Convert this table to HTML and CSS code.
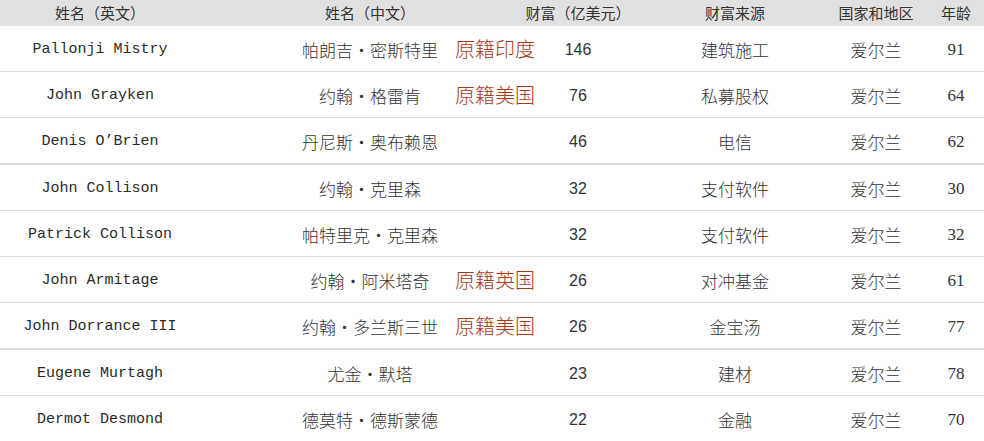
FILE: index.html
```html
<!DOCTYPE html>
<html lang="zh">
<head>
<meta charset="utf-8">
<link rel="stylesheet" href="styles.css">
</head>
<body>
<table class="rich">
  <colgroup>
    <col class="c-en"><col class="c-cn"><col class="c-w"><col class="c-src"><col class="c-ctry"><col class="c-age">
  </colgroup>
  <thead>
    <tr>
      <th class="en">姓名（英文）</th>
      <th>姓名（中文）</th>
      <th>财富（亿美元）</th>
      <th>财富来源</th>
      <th>国家和地区</th>
      <th>年龄</th>
    </tr>
  </thead>
  <tbody>
    <tr>
      <td class="en">Pallonji Mistry</td>
      <td class="cn">帕朗吉·密斯特里<span class="note">原籍印度</span></td>
      <td class="num">146</td><td class="src">建筑施工</td><td class="src">爱尔兰</td><td class="age">91</td>
    </tr>
    <tr>
      <td class="en">John Grayken</td>
      <td class="cn">约翰·格雷肯<span class="note">原籍美国</span></td>
      <td class="num">76</td><td class="src">私募股权</td><td class="src">爱尔兰</td><td class="age">64</td>
    </tr>
    <tr class="thick">
      <td class="en">Denis O’Brien</td>
      <td class="cn">丹尼斯·奥布赖恩</td>
      <td class="num">46</td><td class="src">电信</td><td class="src">爱尔兰</td><td class="age">62</td>
    </tr>
    <tr>
      <td class="en">John Collison</td>
      <td class="cn">约翰·克里森</td>
      <td class="num">32</td><td class="src">支付软件</td><td class="src">爱尔兰</td><td class="age">30</td>
    </tr>
    <tr>
      <td class="en">Patrick Collison</td>
      <td class="cn">帕特里克·克里森</td>
      <td class="num">32</td><td class="src">支付软件</td><td class="src">爱尔兰</td><td class="age">32</td>
    </tr>
    <tr>
      <td class="en">John Armitage</td>
      <td class="cn">约翰·阿米塔奇<span class="note">原籍英国</span></td>
      <td class="num">26</td><td class="src">对冲基金</td><td class="src">爱尔兰</td><td class="age">61</td>
    </tr>
    <tr class="thick">
      <td class="en">John Dorrance III</td>
      <td class="cn">约翰·多兰斯三世<span class="note">原籍美国</span></td>
      <td class="num">26</td><td class="src">金宝汤</td><td class="src">爱尔兰</td><td class="age">77</td>
    </tr>
    <tr>
      <td class="en">Eugene Murtagh</td>
      <td class="cn">尤金·默塔</td>
      <td class="num">23</td><td class="src">建材</td><td class="src">爱尔兰</td><td class="age">78</td>
    </tr>
    <tr class="last">
      <td class="en">Dermot Desmond</td>
      <td class="cn">德莫特·德斯蒙德</td>
      <td class="num">22</td><td class="src">金融</td><td class="src">爱尔兰</td><td class="age">70</td>
    </tr>
  </tbody>
</table>
</body>
</html>
```
FILE: styles.css
```css
html, body {
  margin: 0;
  padding: 0;
  background: #ffffff;
}

.rich {
  width: 984px;
  table-layout: fixed;
  border-collapse: collapse;
  border-spacing: 0;
  color: #333333;
  font-family: "Noto Sans CJK SC", sans-serif;
}

.c-en { width: 230px; }
.c-cn { width: 280px; }
.c-w { width: 136px; }
.c-src { width: 178px; }
.c-ctry { width: 104px; }
.c-age { width: 56px; }

.rich th {
  height: 26px;
  padding: 0;
  background: #e1e1e1;
  font-size: 15px;
  font-weight: 400;
  text-align: center;
  color: #333333;
  line-height: 26px;
}

.rich td {
  height: 42px;
  padding: 3px 0 0;
  text-align: center;
  vertical-align: middle;
  border-bottom: 1px solid #dddddd;
  font-size: 17px;
  font-weight: 300;
  line-height: 24px;
}

.rich tr.thick td {
  border-bottom: 2px solid #dddddd;
}

.rich tr.last td {
  border-bottom: none;
}

.rich .en {
  padding-right: 30px;
}

.rich td.en {
  font-family: "Liberation Mono", monospace;
  font-size: 15px;
  font-weight: 400;
  color: #2a2a2a;
}

.rich td.cn {
  position: relative;
}

.note {
  position: absolute;
  left: 225px;
  top: 50%;
  transform: translateY(-50%);
  font-size: 20px;
  font-weight: 300;
  color: #a93a18;
  white-space: nowrap;
}

.rich td.num {
  font-family: "Liberation Sans", sans-serif;
  font-size: 16px;
  font-weight: 400;
}

.rich td.age {
  font-family: "Liberation Serif", serif;
  font-size: 17px;
  font-weight: 400;
}
```
